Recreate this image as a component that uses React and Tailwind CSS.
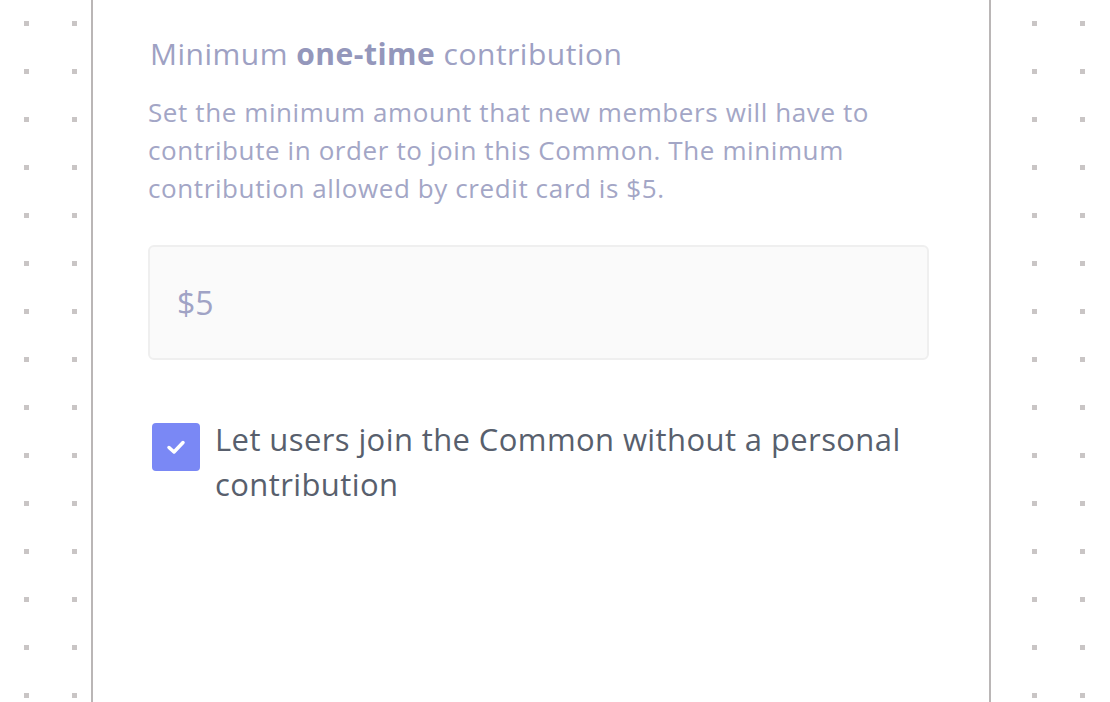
import React from 'react';

// Contribution settings step
function App() {
  return (
    <div className="w-[1110px] h-[702px] overflow-hidden bg-white bg-[conic-gradient(from_270deg_at_5px_5px,#c9c5c5_25%,transparent_0)] bg-size-[48px_48px] bg-position-[24px_21px] font-['Open_Sans','Lato',sans-serif]">
      <div className="ml-[91px] w-[900px] h-full bg-white border-x-2 border-[#bab6b6] pl-[55px] pr-[60px] pt-[34px]">
        <h2 className="text-[30px] leading-[40px] tracking-[0.5px] text-[#9ea1c3] pl-[2px]">
          Minimum <span className="font-bold text-[#9497bb]">one-time</span> contribution
        </h2>
        <p className="mt-[19px] text-[26px] leading-[38px] tracking-[0.6px] text-[#a3a6c6] pr-[10px]">
          Set the minimum amount that new members will have to contribute in order to join this Common. The minimum contribution allowed by credit card is $5.
        </p>
        <div className="mt-[38px] h-[115px] border-2 border-[#efefef] bg-[#fafafa] rounded-md flex items-center px-[27px]">
          <span className="text-[32px] text-[#a0a3c5]">$5</span>
        </div>
        <label className="mt-[62px] flex items-start gap-[15px] pl-[4px]">
          <span className="mt-[1px] w-[48px] h-[48px] shrink-0 rounded-[4px] bg-[#7a88f5] flex items-center justify-center">
            <svg width="20" height="16" viewBox="0 0 20 16" fill="none">
              <path d="M3 8.5l5 4.5L17 3.5" stroke="white" strokeWidth="3.5" strokeLinecap="round" strokeLinejoin="round" />
            </svg>
          </span>
          <span className="-mt-[5px] text-[31px] leading-[45px] tracking-[0.4px] text-[#585f6d]">
            Let users join the Common without a personal contribution
          </span>
        </label>
      </div>
    </div>
  );
}

export default App;
